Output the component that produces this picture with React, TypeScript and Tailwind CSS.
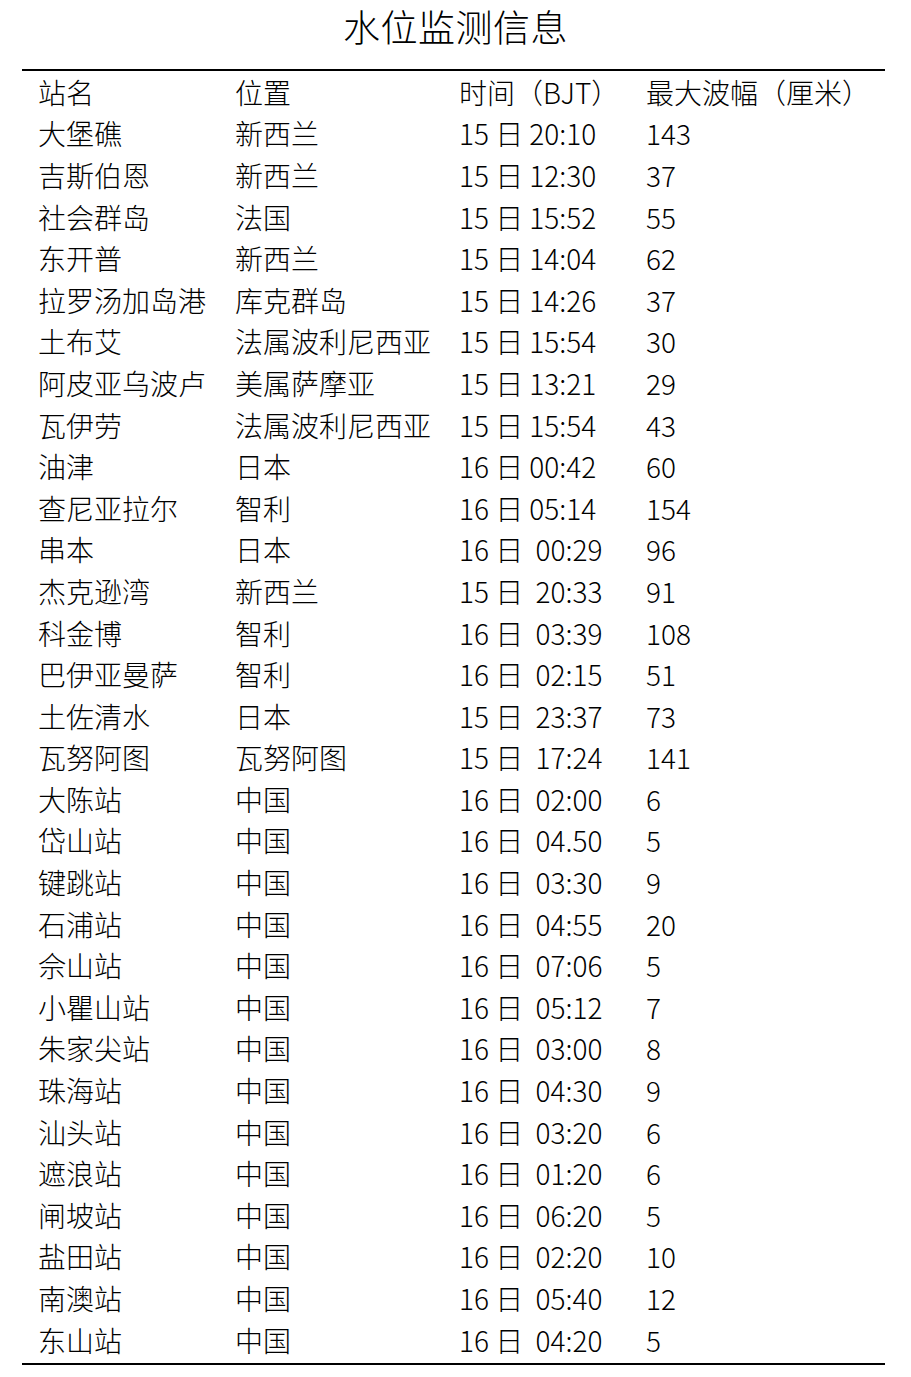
const rows: [string, string, string, string][] = [
  ["大堡礁", "新西兰", "15 日 20:10", "143"],
  ["吉斯伯恩", "新西兰", "15 日 12:30", "37"],
  ["社会群岛", "法国", "15 日 15:52", "55"],
  ["东开普", "新西兰", "15 日 14:04", "62"],
  ["拉罗汤加岛港", "库克群岛", "15 日 14:26", "37"],
  ["土布艾", "法属波利尼西亚", "15 日 15:54", "30"],
  ["阿皮亚乌波卢", "美属萨摩亚", "15 日 13:21", "29"],
  ["瓦伊劳", "法属波利尼西亚", "15 日 15:54", "43"],
  ["油津", "日本", "16 日 00:42", "60"],
  ["查尼亚拉尔", "智利", "16 日 05:14", "154"],
  ["串本", "日本", "16 日  00:29", "96"],
  ["杰克逊湾", "新西兰", "15 日  20:33", "91"],
  ["科金博", "智利", "16 日  03:39", "108"],
  ["巴伊亚曼萨", "智利", "16 日  02:15", "51"],
  ["土佐清水", "日本", "15 日  23:37", "73"],
  ["瓦努阿图", "瓦努阿图", "15 日  17:24", "141"],
  ["大陈站", "中国", "16 日  02:00", "6"],
  ["岱山站", "中国", "16 日  04.50", "5"],
  ["键跳站", "中国", "16 日  03:30", "9"],
  ["石浦站", "中国", "16 日  04:55", "20"],
  ["佘山站", "中国", "16 日  07:06", "5"],
  ["小瞿山站", "中国", "16 日  05:12", "7"],
  ["朱家尖站", "中国", "16 日  03:00", "8"],
  ["珠海站", "中国", "16 日  04:30", "9"],
  ["汕头站", "中国", "16 日  03:20", "6"],
  ["遮浪站", "中国", "16 日  01:20", "6"],
  ["闸坡站", "中国", "16 日  06:20", "5"],
  ["盐田站", "中国", "16 日  02:20", "10"],
  ["南澳站", "中国", "16 日  05:40", "12"],
  ["东山站", "中国", "16 日  04:20", "5"],
];

function Row({ cells }: { cells: string[] }) {
  return (
    <div className="flex h-[41.6px] items-center whitespace-pre pl-4">
      <div className="w-[197px]">{cells[0]}</div>
      <div className="w-[224px]">{cells[1]}</div>
      <div className="w-[187px]">{cells[2]}</div>
      <div>{cells[3]}</div>
    </div>
  );
}

export default function App() {
  return (
    <div
      className="w-[911px] min-h-[1377px] bg-white text-black"
      style={{ fontFamily: '"Noto Sans CJK SC", "Noto Sans", sans-serif' }}
    >
      {/* 标题 */}
      <div className="flex h-[69px] justify-center pt-[2px] text-[37px] font-light leading-[48px] tracking-[0.5px]">
        水位监测信息
      </div>

      <div className="ml-[22px] w-[863px] border-y-2 border-black pb-[3px] text-[28px] font-light leading-none">
        <Row cells={["站名", "位置", "时间（BJT）", "最大波幅（厘米）"]} />
        {rows.map((r, i) => (
          <Row key={i} cells={r} />
        ))}
      </div>
    </div>
  );
}
